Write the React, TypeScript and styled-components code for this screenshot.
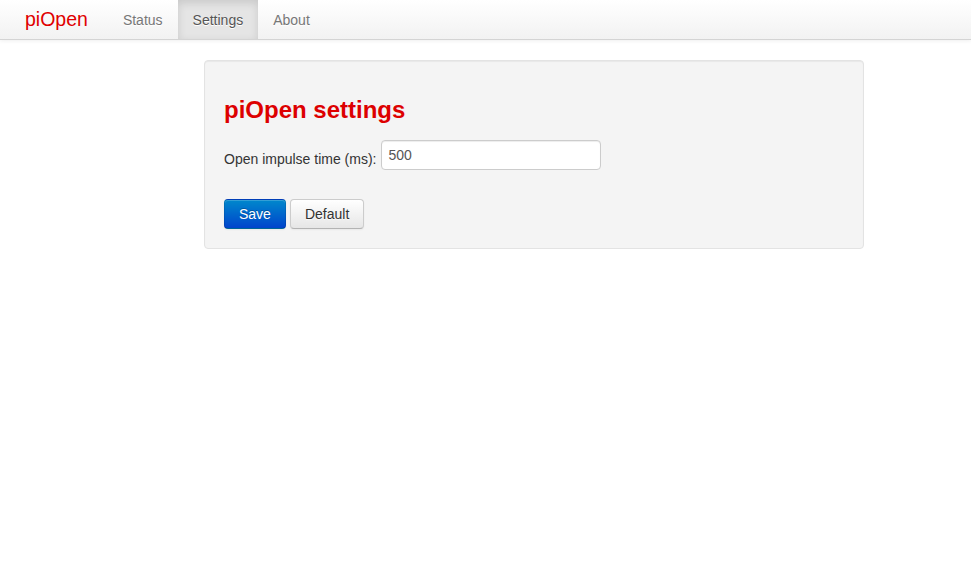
import React from "react";
import styled, { createGlobalStyle } from "styled-components";

const Global = createGlobalStyle`
  html, body { margin: 0; padding: 0; background: #fff; }
  body {
    font-family: "Liberation Sans", Arial, Helvetica, sans-serif;
    font-size: 14px;
    line-height: 20px;
    color: #333;
  }
  * { box-sizing: border-box; }
`;

const Navbar = styled.nav`
  height: 40px;
  display: flex;
  align-items: stretch;
  padding-left: 5px;
  background-image: linear-gradient(to bottom, #ffffff, #f2f2f2);
  border-bottom: 1px solid #d4d4d4;
  box-shadow: 0 1px 4px rgba(0, 0, 0, 0.065);
`;

const Brand = styled.a`
  display: block;
  padding: 9px 20px 11px;
  font-size: 19.5px;
  line-height: 20px;
  color: #e00000;
  text-decoration: none;
`;

const NavList = styled.ul`
  display: flex;
  list-style: none;
  margin: 0;
  padding: 0;
`;

const NavLink = styled.a<{ $active?: boolean }>`
  display: block;
  height: 39px;
  padding: 10px 15px 9px;
  color: ${(p) => (p.$active ? "#555" : "#777")};
  text-decoration: none;
  background: ${(p) => (p.$active ? "#e5e5e5" : "transparent")};
  box-shadow: ${(p) => (p.$active ? "inset 0 3px 8px rgba(0,0,0,0.125)" : "none")};
  text-shadow: 0 1px 0 #fff;
`;

const Main = styled.main`
  display: flex;
  padding: 20px 0 0 204px;
`;

const Well = styled.section`
  width: 660px;
  padding: 19px;
  background: #f4f4f4;
  border: 1px solid #e3e3e3;
  border-radius: 4px;
  box-shadow: inset 0 1px 1px rgba(0, 0, 0, 0.05);
`;

const Title = styled.h2`
  margin: 10px 0;
  font-size: 24px;
  line-height: 40px;
  font-weight: bold;
  color: #dd0000;
`;

const FormRow = styled.div`
  display: flex;
  align-items: center;
  gap: 5px;
  height: 30px;
`;

const Label = styled.label`
  color: #333;
  font-size: 14px;
  padding-top: 7px;
`;

const Input = styled.input`
  width: 220px;
  height: 30px;
  padding: 4px 6px;
  font-family: inherit;
  font-size: 14px;
  line-height: 20px;
  color: #555;
  background: #fff;
  border: 1px solid #ccc;
  border-radius: 4px;
  box-shadow: inset 0 1px 1px rgba(0, 0, 0, 0.075);
  outline: none;
`;

const Actions = styled.div`
  display: flex;
  gap: 4px;
  margin-top: 29px;
`;

const Button = styled.button<{ $primary?: boolean }>`
  height: 30px;
  padding: 4px 14px;
  font-family: inherit;
  font-size: 14px;
  line-height: 20px;
  border-radius: 4px;
  cursor: pointer;
  color: ${(p) => (p.$primary ? "#fff" : "#333")};
  text-shadow: ${(p) =>
    p.$primary ? "0 -1px 0 rgba(0,0,0,0.25)" : "0 1px 1px rgba(255,255,255,0.75)"};
  background-image: ${(p) =>
    p.$primary
      ? "linear-gradient(to bottom, #0088cc, #0044cc)"
      : "linear-gradient(to bottom, #ffffff, #e6e6e6)"};
  border: 1px solid
    ${(p) => (p.$primary ? "rgba(0,0,0,0.1)" : "#cccccc")};
  border-bottom-color: ${(p) => (p.$primary ? "rgba(0,0,0,0.25)" : "#b3b3b3")};
  box-shadow: inset 0 1px 0 rgba(255, 255, 255, 0.2), 0 1px 2px rgba(0, 0, 0, 0.05);
`;

export default function App() {
  return (
    <>
      <Global />
      <Navbar>
        <Brand href="#">piOpen</Brand>
        <NavList>
          <li><NavLink href="#">Status</NavLink></li>
          <li><NavLink href="#" $active>Settings</NavLink></li>
          <li><NavLink href="#">About</NavLink></li>
        </NavList>
      </Navbar>
      <Main>
        <Well>
          <Title>piOpen settings</Title>
          <FormRow>
            <Label htmlFor="imp">Open impulse time (ms):</Label>
            <Input id="imp" defaultValue="500" />
          </FormRow>
          <Actions>
            <Button $primary>Save</Button>
            <Button>Default</Button>
          </Actions>
        </Well>
      </Main>
    </>
  );
}
